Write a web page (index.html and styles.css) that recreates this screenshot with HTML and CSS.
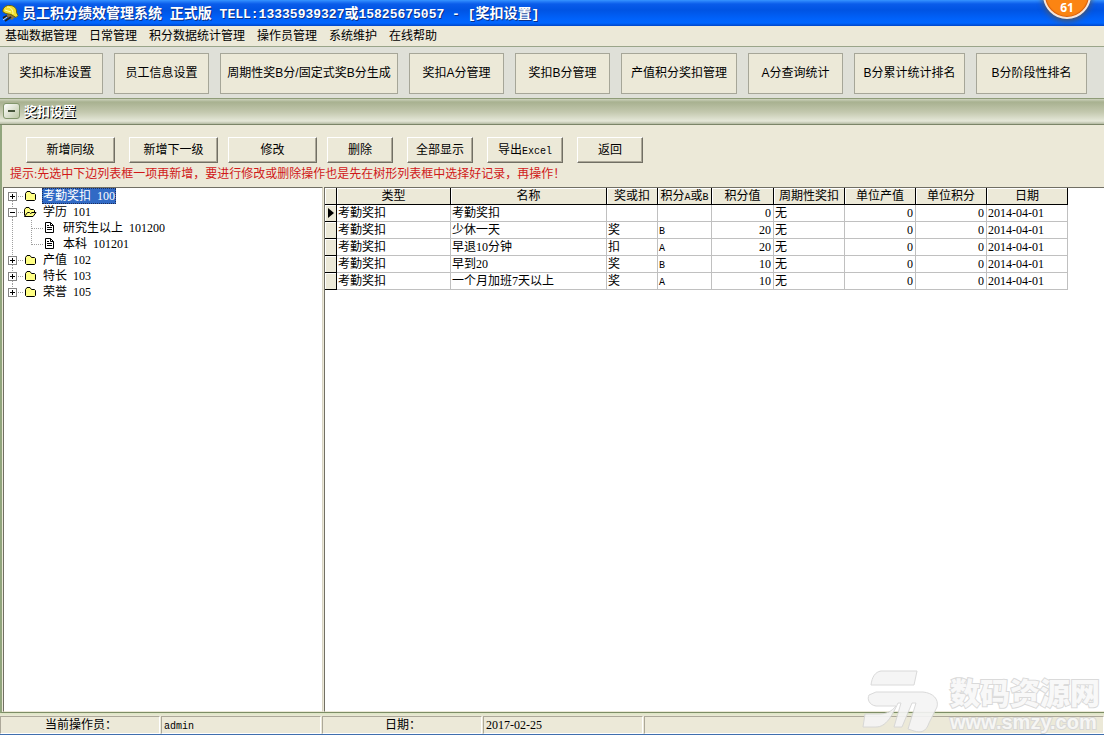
FILE: index.html
```html
<!DOCTYPE html>
<html lang="zh-CN">
<head>
<meta charset="utf-8">
<title>员工积分绩效管理系统</title>
<link rel="stylesheet" href="styles.css">
</head>
<body>
<svg class="defs" aria-hidden="true">
  <defs>
    <g id="plus"><rect x="4.5" y="4.5" width="8" height="8" fill="#fff" stroke="#848484"/><path d="M6 8.5h5M8.500 6v5" stroke="#000"/><path d="M14 8.500h6" stroke="#a0a0a0" stroke-dasharray="1 1"/></g>
    <g id="minus"><rect x="4.5" y="4.5" width="8" height="8" fill="#fff" stroke="#848484"/><path d="M6 8.500h5" stroke="#000"/><path d="M14 8.500h6" stroke="#a0a0a0" stroke-dasharray="1 1"/></g>
    <g id="folder"><path d="M21.500 11.500v-6l1.500-2h3l1.500 2h3l1 1v5l-1 1h-8z" fill="#ffff84" stroke="#000"/></g>
    <g id="open"><path d="M20.500 11.500v-6l1.500-2h3l1.500 2h3l1 1v2" fill="#ffff84" stroke="#000"/><path d="M20.500 12.500l3-4h2l1 1 1.500-1h4l-3 4z" fill="#ffff84" stroke="#000"/></g>
    <g id="doc"><path d="M41.500 2.500h5l3 3v7h-8z" fill="#fff" stroke="#000"/><path d="M46.500 2.500v3h3M43 5.500h2M43 7.500h5M43 9.500h5" fill="none" stroke="#000"/></g>
  </defs>
</svg>
<div class="window">
  <header class="titlebar">
    <svg class="app-icon" width="17" height="18" viewBox="0 0 17 18" aria-hidden="true">
      <path d="M5 9l7 2 1 2-3 3-5-3z" fill="#8a7048"/>
      <path d="M1 8C0 4 4 1 8 1.500c4 0 7 3 6.500 7l1.500 3-2 2-5-3-5-1z" fill="#f4e030" stroke="#6b6410"/>
      <path d="M5 3c4 0 6 3 6 7M3 6l6 2" fill="none" stroke="#fffbb0"/>
      <path d="M1 14l4-2M3 17l6-4" stroke="#222" stroke-width="2"/>
      <path d="M1 16l4-3" stroke="#ddd"/>
    </svg>
    <h1>员工积分绩效管理系统<span class="latin"> </span>正式版<span class="latin"> TELL:13335939327</span>或<span class="latin">15825675057 - [</span>奖扣设置<span class="latin">]</span></h1>
    <span class="badge">61</span>
  </header>
  <nav class="menu">
    <a href="#">基础数据管理</a><a href="#">日常管理</a><a href="#">积分数据统计管理</a><a href="#">操作员管理</a><a href="#">系统维护</a><a href="#">在线帮助</a>
  </nav>
  <div class="toolbar">
    <button class="tool w-s">奖扣标准设置</button>
    <button class="tool w-s">员工信息设置</button>
    <button class="tool w-xl">周期性奖B分/固定式奖B分生成</button>
    <button class="tool w-s">奖扣A分管理</button>
    <button class="tool w-s">奖扣B分管理</button>
    <button class="tool w-l">产值积分奖扣管理</button>
    <button class="tool w-s">A分查询统计</button>
    <button class="tool w-m">B分累计统计排名</button>
    <button class="tool w-m">B分阶段性排名</button>
  </div>
  <div class="caption">
    <button class="collapse" aria-label="折叠"></button>
    <h2>奖扣设置</h2>
  </div>
  <main class="content">
    <div class="actions">
      <button class="btn wide">新增同级</button>
      <div class="group">
        <button class="btn wide">新增下一级</button>
        <button class="btn wide">修改</button>
        <button class="btn">删除</button>
      </div>
      <button class="btn">全部显示</button>
      <button class="btn mid">导出<span class="mono">Excel</span></button>
      <button class="btn">返回</button>
    </div>
    <p class="hint">提示:先选中下边列表框一项再新增，要进行修改或删除操作也是先在树形列表框中选择好记录，再操作！</p>
    <div class="panes">
      <ul class="tree">
        <li><button class="toggle" aria-label="展开"><svg width="38" height="16"><path d="M8.500 13v3" class="dots"/><use href="#plus"/><use href="#folder"/></svg></button><span class="label selected">考勤奖扣&nbsp; 100</span></li>
        <li><button class="toggle" aria-label="折叠"><svg width="38" height="16"><path d="M8.500 0v4M8.500 13v3" class="dots"/><use href="#minus"/><use href="#open"/></svg></button><span class="label">学历&nbsp; 101</span></li>
        <li><svg width="57" height="16"><path d="M8.500 0v16M27.500 0v16M28 8.500h11" class="dots"/><use href="#doc"/></svg><span class="label">研究生以上&nbsp; 101200</span></li>
        <li><svg width="57" height="16"><path d="M8.500 0v16M27.500 0v9M28 8.500h11" class="dots"/><use href="#doc"/></svg><span class="label">本科&nbsp; 101201</span></li>
        <li><button class="toggle" aria-label="展开"><svg width="38" height="16"><path d="M8.500 0v4M8.500 13v3" class="dots"/><use href="#plus"/><use href="#folder"/></svg></button><span class="label">产值&nbsp; 102</span></li>
        <li><button class="toggle" aria-label="展开"><svg width="38" height="16"><path d="M8.500 0v4M8.500 13v3" class="dots"/><use href="#plus"/><use href="#folder"/></svg></button><span class="label">特长&nbsp; 103</span></li>
        <li><button class="toggle" aria-label="展开"><svg width="38" height="16"><path d="M8.500 0v4" class="dots"/><use href="#plus"/><use href="#folder"/></svg></button><span class="label">荣誉&nbsp; 105</span></li>
      </ul>
      <div class="grid-pane">
        <table class="grid">
          <colgroup><col class="c-mark"><col class="c-type"><col class="c-name"><col class="c-kind"><col class="c-ab"><col class="c-score"><col class="c-unit"><col class="c-unit"><col class="c-unit"><col class="c-date"></colgroup>
          <thead><tr><th></th><th>类型</th><th>名称</th><th>奖或扣</th><th>积分<span class="mono">A</span>或<span class="mono">B</span></th><th>积分值</th><th>周期性奖扣</th><th>单位产值</th><th>单位积分</th><th>日期</th></tr></thead>
          <tbody>
            <tr><th><svg class="marker" width="6" height="10" aria-label="当前行"><path d="M0 0l6 5-6 5z"/></svg></th><td>考勤奖扣</td><td>考勤奖扣</td><td></td><td></td><td class="num">0</td><td>无</td><td class="num">0</td><td class="num">0</td><td>2014-04-01</td></tr>
            <tr><th></th><td>考勤奖扣</td><td>少休一天</td><td>奖</td><td><span class="mono">B</span></td><td class="num">20</td><td>无</td><td class="num">0</td><td class="num">0</td><td>2014-04-01</td></tr>
            <tr><th></th><td>考勤奖扣</td><td>早退10分钟</td><td>扣</td><td><span class="mono">A</span></td><td class="num">20</td><td>无</td><td class="num">0</td><td class="num">0</td><td>2014-04-01</td></tr>
            <tr><th></th><td>考勤奖扣</td><td>早到20</td><td>奖</td><td><span class="mono">B</span></td><td class="num">10</td><td>无</td><td class="num">0</td><td class="num">0</td><td>2014-04-01</td></tr>
            <tr><th></th><td>考勤奖扣</td><td>一个月加班7天以上</td><td>奖</td><td><span class="mono">A</span></td><td class="num">10</td><td>无</td><td class="num">0</td><td class="num">0</td><td>2014-04-01</td></tr>
          </tbody>
        </table>
      </div>
    </div>
  </main>
  <footer class="status">
    <span class="cell center">当前操作员：</span>
    <span class="cell"><span class="mono">admin</span></span>
    <span class="cell center">日期：</span>
    <span class="cell">2017-02-25</span>
    <span class="cell rest"></span>
  </footer>
  <div class="watermark">
    <svg width="76" height="64" viewBox="0 0 76 64" aria-hidden="true">
      <path d="M19 1H55L52 15H9C10 7 13 2 19 1z"/>
      <path d="M14 22H61C71 23 77 29 75 37L67 53C64 62 59 63 52 61L46 59L54 33H50L40 57H32L39 33H36C30 46 24 57 14 57H1L3 44H17C25 44 30 41 34 36H14C7 35 5 29 7 25z"/>
    </svg>
    <div class="mark-text"><span class="mark-name">数码资源网</span><span class="mark-url">www.smzy.com</span></div>
  </div>
</div>
</body>
</html>
```
FILE: styles.css
```css
* { box-sizing: border-box; }
body {
  margin: 0;
  font: 12px/16px "Liberation Serif", "Noto Sans CJK SC", sans-serif;
  color: #000;
  background: #ece9d8;
}
button { font: inherit; color: inherit; padding: 0; border: 0; background: none; white-space: nowrap; }
h1, h2, p, ul { margin: 0; padding: 0; }
svg { display: block; flex: none; }
.defs { position: absolute; width: 0; height: 0; }
.mono { font-family: "Liberation Mono", monospace; font-size: 10px; line-height: 1; }

.window {
  position: relative;
  display: flex;
  flex-direction: column;
  min-height: 100vh;
  overflow: hidden;
  border-bottom: 1px solid #3f6fae;
}

.titlebar {
  position: relative;
  display: flex;
  align-items: center;
  gap: 3px;
  height: 26px;
  padding-left: 2px;
  background: linear-gradient(#3796ff 0, #2a84fb 1px, #0a5cea 4px, #0054e3 10px, #0062fb 19px, #0066ff 23px, #0046c8 26px);
}
.titlebar h1 {
  font: bold 14px/20px "Noto Sans CJK SC", sans-serif;
  color: #fff;
  text-shadow: 1px 1px #0a2f86;
  white-space: pre;
}
.titlebar .latin { font-family: "Liberation Mono", monospace; font-size: 13px; }
.badge {
  position: absolute;
  top: -29px;
  right: 13px;
  width: 48px;
  height: 48px;
  padding-top: 28px;
  border: 2px solid #f3e6e0;
  border-radius: 50%;
  background: #fb8412;
  box-shadow: 0 2px 6px #555, inset 0 0 1px 1px #d35c10;
  color: #fff;
  font: bold 12px/14px "Noto Sans", sans-serif;
  text-align: center;
}

.menu { display: flex; gap: 12px; height: 20px; padding: 2px 5px; line-height: 16px; background: #ece9d8; }
.menu a { color: #000; text-decoration: none; }

.toolbar {
  display: flex;
  align-items: center;
  gap: 11px;
  height: 53px;
  padding: 1px 0 0 8px;
  border-top: 1px solid #9aa58a;
  border-bottom: 1px solid #8f9c78;
  background: #dfe0d8;
}
.tool {
  flex: none;
  height: 41px;
  border: 1px solid #a6a698;
  background: #ece9d8;
  font-family: "Liberation Sans", "Noto Sans CJK SC", sans-serif;
}
.w-s { width: 95px; }
.w-m { width: 111px; }
.w-l { width: 116px; }
.w-xl { width: 178px; }

.caption {
  display: flex;
  align-items: center;
  gap: 4px;
  height: 26px;
  padding: 0 0 2px 3px;
  border-bottom: 1px solid #7b8568;
  background: linear-gradient(#cdd3bd 0, #a8b190 3px, #c3c8ae 13px, #e5e7d8 22px, #b4baa2 25px);
}
.caption h2 { font: bold 13px/16px "Noto Sans CJK SC", sans-serif; color: #fff; text-shadow: 1px 1px #000; }
.collapse {
  display: grid;
  place-items: center;
  width: 17px;
  height: 16px;
  border: 1px solid #82966c;
  border-radius: 3px;
  background: linear-gradient(135deg, #fff, #bcc6a4);
}
.collapse::before { content: ""; width: 7px; height: 2px; background: #46543a; }

.content {
  flex: 1;
  display: flex;
  flex-direction: column;
  border-left: 2px solid #91a57d;
  border-bottom: 1px solid #7d8d66;
  background: #ece9d8;
}
.actions { display: flex; gap: 14px; padding: 12px 0 3px 24px; }
.group { display: flex; gap: 10px; }
.btn {
  width: 66px;
  height: 26px;
  border: 1px solid;
  border-color: #fff #716f64 #716f64 #fff;
  box-shadow: inset -1px -1px #aca899;
}
.btn.wide { width: 89px; }
.btn.mid { width: 76px; }
.hint { padding: 0 8px; margin-bottom: 5px; color: #d01818; white-space: nowrap; }

.panes { flex: 1; display: flex; gap: 1px; padding-left: 1px; }
.tree {
  width: 320px;
  border: 1px solid #716f64;
  border-right-color: #d8d4c4;
  border-bottom-color: #ece9d8;
  background: #fff;
  list-style: none;
}
.tree li { display: flex; height: 16px; }
.toggle { display: block; }
.dots { stroke: #a0a0a0; stroke-dasharray: 1 1; fill: none; }
.label { padding: 0 1px; white-space: nowrap; }
svg + .label { padding-left: 2px; }
.selected { background: #316ac5; color: #fff; outline: 1px dotted #1c2d5c; outline-offset: -1px; }

.grid-pane { flex: 1; border: 1px solid #716f64; border-right: 0; border-bottom-color: #ece9d8; background: #fff; }
.grid { table-layout: fixed; width: 743px; border-collapse: separate; border-spacing: 0; }
.grid th, .grid td { height: 17px; padding: 0 2px 0 1px; line-height: 16px; white-space: nowrap; overflow: hidden; }
.grid th {
  padding: 0;
  font-weight: normal;
  background: #ece9d8;
  border-right: 1px solid #000;
  border-bottom: 1px solid #000;
  box-shadow: inset 1px 1px #fff;
}
.grid td { border-right: 1px solid #c0c0c0; border-bottom: 1px solid #c0c0c0; text-align: left; }
.grid td.num { text-align: right; }
.marker { margin: 0 auto; }
.c-mark { width: 12px; }
.c-type { width: 114px; }
.c-name { width: 156px; }
.c-kind { width: 51px; }
.c-ab { width: 54px; }
.c-score { width: 62px; }
.c-unit { width: 71px; }
.c-date { width: 81px; }

.status { display: flex; gap: 1px; height: 21px; padding-top: 3px; background: linear-gradient(#dbe4c2, #ece9d8 3px); }
.cell {
  width: 160px;
  padding-left: 2px;
  border: 1px solid #aca899;
  border-right-color: #fff;
  border-bottom-color: #fff;
  line-height: 16px;
}
.cell.center { text-align: center; }
.cell.rest { flex: 1; }

.watermark { position: absolute; right: 4px; bottom: 0; display: flex; gap: 12px; opacity: 0.9; }
.watermark path { fill: #f5f5f5; stroke: #d6d6d6; }
.mark-text { display: flex; flex-direction: column; color: #f8f8f8; -webkit-text-stroke: 2px #d6d6d6; paint-order: stroke fill; }
.mark-name { font: 900 30px/42px "Noto Sans CJK SC", sans-serif; }
.mark-url { font: bold 20px/20px "Liberation Sans", sans-serif; }
```
